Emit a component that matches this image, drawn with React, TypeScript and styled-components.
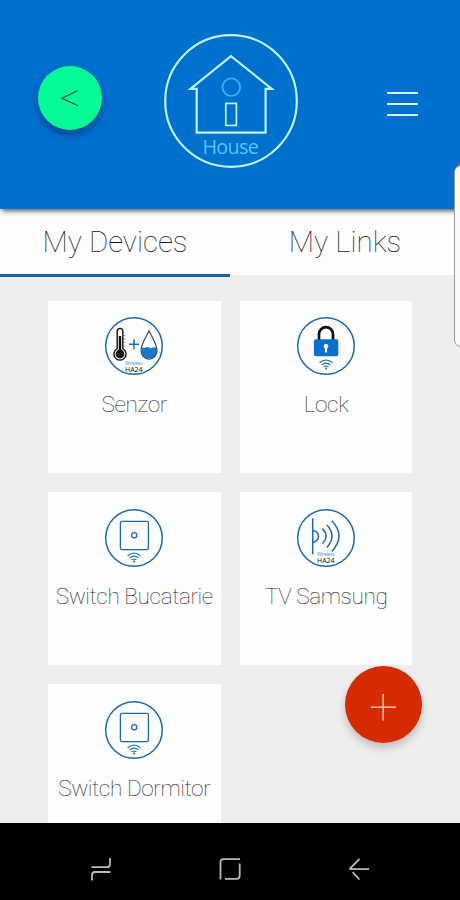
import styled, { createGlobalStyle } from "styled-components";

const BLUE = "#0070cf";
const ICON_BLUE = "#1c6aa8";

function WifiMark({ y = 0 }: { y?: number }) {
    return (
        <g transform={`translate(0 ${y})`} fill="none" stroke={ICON_BLUE} strokeWidth="1.2">
            <path d="M23.6 47.2 Q30 41.6 36.4 47.2" />
            <path d="M25.6 49.3 Q30 45.6 34.4 49.3" />
            <path d="M27.6 51.4 Q30 49.4 32.4 51.4" />
            <circle cx="30" cy="52.9" r="1" fill={ICON_BLUE} stroke="none" />
        </g>
    )
}

function BrandMark({ y = 0 }: { y?: number }) {
    return (
        <g transform={`translate(0 ${y})`} fontFamily="Open Sans, sans-serif">
            <text x="21" y="48.6" fontSize="4.8" fill="#4a90d0" textLength="17.5">Wireless</text>
            <text x="21" y="55.6" fontSize="7" fill="#111" textLength="17.5">HA24</text>
        </g>
    )
}

function SensorIcon() {
    return (
        <DeviceIcon viewBox="0 0 60 60">
            <circle cx="30" cy="30" r="28.3" fill="none" stroke={ICON_BLUE} strokeWidth="1.5" />
            <path d="M13.2 32.6 V15.2 a2.8 2.8 0 0 1 5.6 0 V32.6 a6.1 6.1 0 1 1 -5.6 0 Z" fill="#fff" stroke="#111" strokeWidth="1.4" />
            <circle cx="16" cy="38" r="4.4" fill="#111" />
            <path d="M16 20 V38" stroke="#111" strokeWidth="2.4" />
            <path d="M19.5 19.5 h2 M19.5 23 h2 M19.5 26.5 h2 M19.5 30 h2" stroke="#555" strokeWidth="0.6" />
            <path d="M25 28.3 H35 M30 23.3 V33.3" stroke={ICON_BLUE} strokeWidth="1.5" />
            <path d="M38 31.2 q1.8 1.2 3.5 0.2 q1.8 -0.8 3.5 0.2 q1.8 1 3.5 0 q1.8 -0.8 3.8 0.2 C53.6 39 50 42.4 45 42.4 C40 42.4 36.5 38.5 38 31.2 Z" fill="#1676d2" />
            <path d="M45 14.8 C42 21.5 37 28 37 34.8 a8 8.4 0 0 0 16 0 C53 28 48 21.5 45 14.8 Z" fill="none" stroke="#2b3d4c" strokeWidth="1.1" />
            <BrandMark />
        </DeviceIcon>
    )
}

function LockIcon() {
    return (
        <DeviceIcon viewBox="0 0 60 60">
            <circle cx="30" cy="30" r="28.3" fill="none" stroke={ICON_BLUE} strokeWidth="1.5" />
            <path d="M23 24 V18.2 a7 7 0 0 1 14 0 V24" fill="none" stroke="#111" strokeWidth="2.7" />
            <rect x="17.9" y="23.2" width="24.4" height="17" rx="2" fill="#0a6fd0" />
            <circle cx="30" cy="30.2" r="2.3" fill="#fff" />
            <rect x="28.9" y="31" width="2.2" height="5.4" rx="0.6" fill="#fff" />
            <WifiMark y={-0.4} />
        </DeviceIcon>
    )
}

function SwitchIcon() {
    return (
        <DeviceIcon viewBox="0 0 60 60">
            <circle cx="30" cy="30" r="28.3" fill="none" stroke={ICON_BLUE} strokeWidth="1.5" />
            <rect x="16.4" y="13.4" width="28" height="28.2" rx="1.6" fill="none" stroke={ICON_BLUE} strokeWidth="1.3" />
            <circle cx="30.2" cy="27.2" r="2.6" fill="none" stroke={ICON_BLUE} strokeWidth="1.2" />
            <WifiMark y={0.6} />
        </DeviceIcon>
    )
}

function RemoteIcon() {
    return (
        <DeviceIcon viewBox="0 0 60 60">
            <circle cx="30" cy="30" r="28.3" fill="none" stroke={ICON_BLUE} strokeWidth="1.5" />
            <g fill="none" stroke={ICON_BLUE} strokeWidth="1.5">
                <path d="M16.7 10.3 V46.3" />
                <path d="M16.7 22.6 A5.8 5.8 0 0 1 16.7 34.2" />
                <path d="M26.5 20.6 Q33.8 28 26.5 35.6" />
                <path d="M31 17 Q41 28 31 39.4" />
                <path d="M35.8 12.8 Q50.2 28 35.8 43.4" />
            </g>
            <BrandMark y={-0.6} />
        </DeviceIcon>
    )
}

const devices = [
    { name: "Senzor", icon: <SensorIcon /> },
    { name: "Lock", icon: <LockIcon /> },
    { name: "Switch Bucatarie", icon: <SwitchIcon /> },
    { name: "TV Samsung", icon: <RemoteIcon /> },
    { name: "Switch Dormitor", icon: <SwitchIcon /> },
];

function App() {
    return (
        <Screen>
            <GlobalStyle />
            <Header>
                <BackButton aria-label="Back">
                    <svg width="18" height="18" viewBox="0 0 18 18" fill="none" stroke="#134a35" strokeWidth="1.1">
                        <path d="M16.6 1.8 L0.9 9.2 L16.6 16.6" />
                    </svg>
                </BackButton>
                <Logo viewBox="0 0 134 134">
                    <g fill="none" stroke="#bdf3ff" strokeWidth="2.2">
                        <circle cx="67" cy="67" r="65.8" />
                        <path d="M67 22.2 L26.5 54.8 H32.7 V98.6 H101.6 V54.8 H107.8 Z" />
                        <rect x="61.8" y="69.4" width="10.6" height="22" strokeWidth="1.7" />
                        <circle cx="67.3" cy="53.2" r="8.8" stroke="#44adf5" strokeWidth="1.7" />
                    </g>
                    <text x="38.4" y="120" fontFamily="Open Sans, sans-serif" fontSize="19.8" fill="#58c3fa" textLength="56.4">House</text>
                </Logo>
                <MenuButton aria-label="Menu">
                    <span />
                    <span />
                    <span />
                </MenuButton>
            </Header>
            <Tabs>
                <Tab $active>My Devices</Tab>
                <Tab>My Links</Tab>
            </Tabs>
            <Content>
                {devices.map((device) => (
                    <Card key={device.name}>
                        {device.icon}
                        <p>{device.name}</p>
                    </Card>
                ))}
            </Content>
            <NavBar>
                <svg width="22" height="24" viewBox="0 0 22 24">
                    <path d="M1.5 10.2 H17 Q20 10.2 20 7.2 V1 M20.5 15 H5 Q2 15 2 18 V23.5" />
                </svg>
                <svg width="22" height="24" viewBox="0 0 22 24">
                    <path d="M1.5 22.5 V5 Q1.5 2.2 4.3 2.2 H21 M20.7 6.5 V18.8 Q20.7 21.8 17.7 21.8 H6" />
                </svg>
                <svg width="22" height="24" viewBox="0 0 22 24">
                    <path d="M11.5 2 L2.4 11.2 Q1.6 12.2 2.6 12.2 H21 M4.6 15.2 L11.5 22.5" />
                </svg>
            </NavBar>
            <AddButton aria-label="Add">
                <svg width="28" height="28" viewBox="0 0 28 28" stroke="#ffe9dc" strokeWidth="1.3">
                    <path d="M1 14.2 H26 M13.2 1 V27.5" />
                </svg>
            </AddButton>
            <EdgeHandle />
        </Screen>
    )
}

const GlobalStyle = createGlobalStyle`
    * {
        box-sizing: border-box;
    }

    body {
        margin: 0;
        font-family: Roboto, sans-serif;
    }

    button {
        border: 0;
        padding: 0;
        font-family: inherit;
    }
`;

const Screen = styled.div`
    position: relative;
    display: flex;
    flex-direction: column;
    width: 460px;
    height: 900px;
    background: #eeeeee;
    overflow: hidden;
`;

const Header = styled.header`
    display: flex;
    align-items: flex-start;
    flex: 0 0 209px;
    padding: 34px 0 0 38px;
    background: ${BLUE};
    box-shadow: 2px 2px 5px rgba(0, 0, 0, 0.65);
    z-index: 1;
`;

const BackButton = styled.button`
    display: flex;
    align-items: center;
    justify-content: center;
    width: 64px;
    height: 64px;
    margin-top: 32px;
    border-radius: 50%;
    background: #05fb96;
    box-shadow: 0 5px 8px rgba(0, 30, 90, 0.5);
`;

const Logo = styled.svg`
    width: 134px;
    height: 134px;
    margin-left: 62px;
`;

const MenuButton = styled.button`
    display: flex;
    flex-direction: column;
    gap: 8.5px;
    width: 31px;
    margin: 57.5px 0 0 89px;
    background: none;

    span {
        height: 2.5px;
        background: #d5f8ff;
    }
`;

const Tabs = styled.nav`
    display: flex;
    flex: 0 0 68px;
    align-items: flex-start;
`;

const Tab = styled.button<{ $active?: boolean }>`
    flex: 1;
    height: ${({ $active }) => ($active ? "68px" : "66px")};
    padding-bottom: ${({ $active }) => ($active ? "0" : "1px")};
    border-bottom: ${({ $active }) => ($active ? "3px solid #1263ae" : "0")};
    background: #fdfdfd;
    color: #1a1a1a;
    font-size: 29.5px;
    font-weight: 100;
`;

const Content = styled.main`
    display: grid;
    grid-template-columns: 172.5px 172.5px;
    grid-auto-rows: 172.5px;
    gap: 19.4px;
    flex: 1;
    min-height: 0;
    padding: 23.5px 0 0 48px;
    overflow: hidden;
`;

const Card = styled.article`
    display: flex;
    flex-direction: column;
    align-items: center;
    padding-top: 15.6px;
    background: #fdfdfd;

    p {
        margin: 15.4px 0 0;
        color: #1a1a1a;
        font-size: 22.6px;
        font-weight: 100;
        letter-spacing: -0.4px;
        line-height: 28px;
        white-space: nowrap;
    }
`;

const DeviceIcon = styled.svg`
    flex: none;
    width: 60px;
    height: 60px;
`;

const NavBar = styled.footer`
    display: flex;
    align-items: flex-start;
    justify-content: space-between;
    flex: 0 0 77px;
    padding: 34px 90px 0;
    background: #000;

    svg {
        fill: none;
        stroke: #b9b9b9;
        stroke-width: 1.8;
    }
`;

const AddButton = styled.button`
    position: absolute;
    top: 666px;
    left: 345px;
    display: flex;
    align-items: center;
    justify-content: center;
    width: 77px;
    height: 77px;
    padding-top: 4px;
    border-radius: 50%;
    background: #d62b00;
    box-shadow: 0 5px 9px rgba(0, 0, 0, 0.2);
`;

const EdgeHandle = styled.div`
    position: absolute;
    top: 165px;
    right: -8px;
    width: 14px;
    height: 182px;
    border: 1px solid #999;
    border-radius: 8px;
    background: #fafafa;
    z-index: 2;
`;

export default App;
